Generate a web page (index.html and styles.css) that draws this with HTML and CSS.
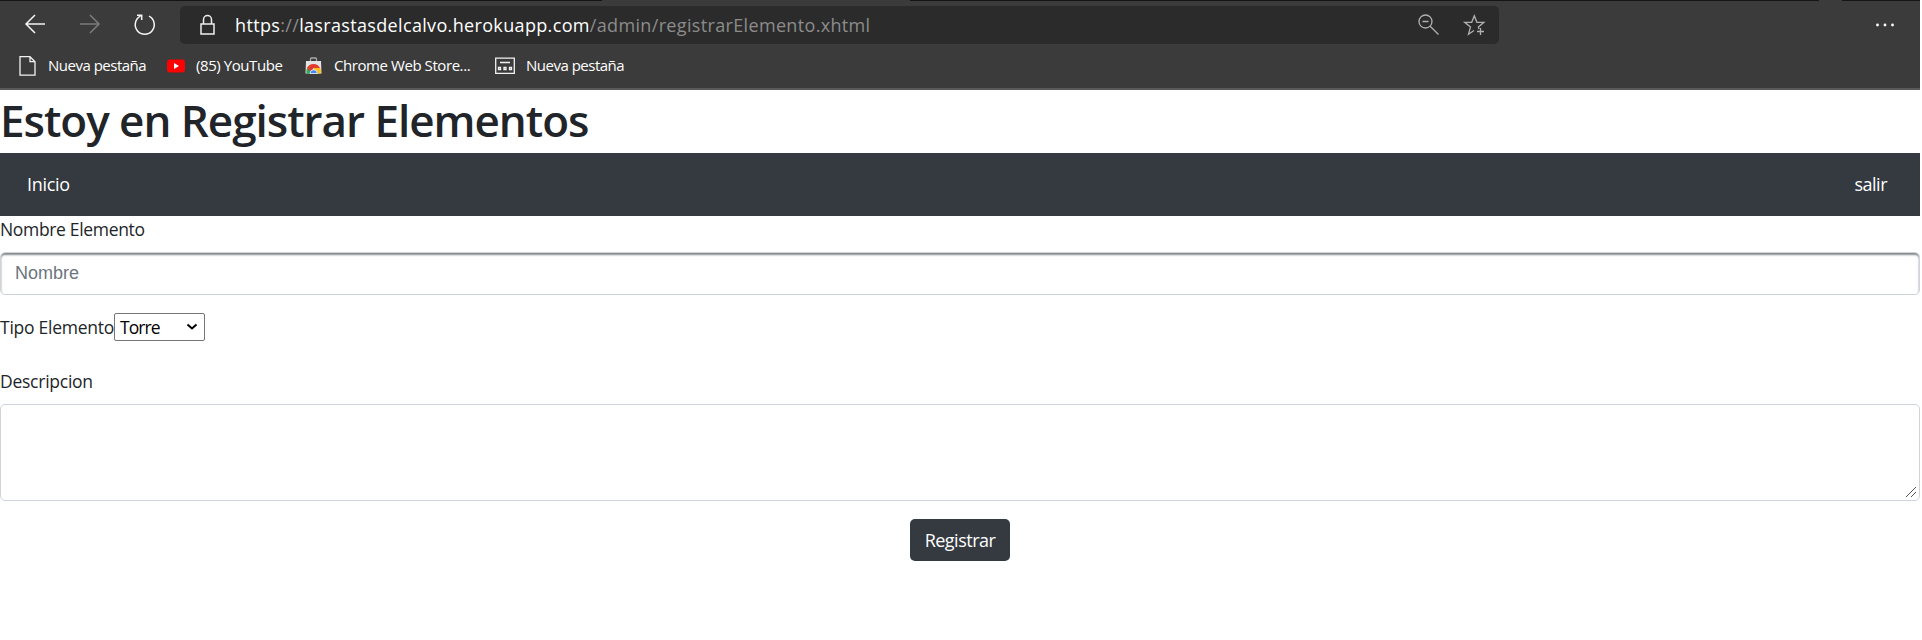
FILE: index.html
```html
<!DOCTYPE html>
<html lang="es">
<head>
<meta charset="utf-8">
<title>Registrar Elementos</title>
<link rel="stylesheet" href="styles.css">
</head>
<body>
<div class="window">
  <header class="browser">
    <div class="tab-edge"><span class="edge-left"></span><span class="edge-mid"></span><span class="edge-right"></span></div>
    <div class="toolbar">
      <svg class="nav-icons" width="180" height="38" fill="none" stroke="#f4f4f4" stroke-width="1.5">
        <path d="M45 18H26M35 9l-9 9 9 9"/>
        <path stroke="#7b7b7b" d="M80 18h19M90 9l9 9-9 9"/>
        <path d="M149 10.200A9.500 9.500 0 1 1 140.500 10.200M137 9.200h4.700v4.700"/>
      </svg>
      <div class="address">
        <svg class="lock" width="16" height="22" fill="none" stroke="#eee" stroke-width="1.500"><path d="M1 10h13v10H1zM3.500 10V5.500a4 4 0 0 1 8 0V10"/></svg>
        <span class="url"><b>https</b>://<b>lasrastasdelcalvo.herokuapp.com</b>/admin/registrarElemento.xhtml</span>
        <svg class="address-icons" width="82" height="38" fill="none" stroke="#b0b0b0" stroke-width="1.300">
          <circle cx="8.500" cy="15.500" r="6.500"/><path d="M5.500 15.500h6M13.200 20.200l8.300 8.300"/>
          <path d="M57 24.500l-5.500 3.700 2-7.200-5.800-4.700h7l2.600-6.500 2.600 6.500h7l-5.500 4.700.5 2M63.500 22v7M60 25.500h7"/>
        </svg>
      </div>
      <svg class="more" width="22" height="6" fill="#fff"><circle cx="2.500" cy="3" r="1.400"/><circle cx="10" cy="3" r="1.400"/><circle cx="17.500" cy="3" r="1.400"/></svg>
    </div>
    <nav class="bookmarks">
      <a class="bookmark first"><svg width="18" height="20" fill="none" stroke="#f2f2f2" stroke-width="1.300"><path d="M1 .7h10l5 5v13.500H1zM11 .7v5h5"/></svg><span class="t-new">Nueva pestaña</span></a>
      <a class="bookmark second"><svg width="18" height="20"><rect y="3.500" width="18" height="13" rx="3" fill="red"/><path d="M7 7l5 3-5 3z" fill="#fff"/></svg><span class="t-tube">(85) YouTube</span></a>
      <a class="bookmark third"><svg width="18" height="20"><path d="M5.500 5V3q0-1 1-1h4q1 0 1 1v2" fill="none" stroke="#aaa" stroke-width="1.300"/><path d="M1 5h15l.5 12.500H.5z" fill="#e4e4e4"/><path d="M1.500 17.500a7.200 7.200 0 0 1 1-6l5 3.500v2.500z" fill="#34a853"/><path d="M2 12a7.200 7.200 0 0 1 13 0H8.500L6 16z" fill="#e33b2e"/><path d="M9 12h6.300q1 2.500.3 5.500H9z" fill="#fbc116"/><path d="M5 17.500a3.700 3.700 0 0 1 7.400 0z" fill="#4285f4" stroke="#fff" stroke-width=".7"/></svg><span class="t-store">Chrome Web Store...</span></a>
      <a class="bookmark fourth"><svg width="20" height="20" fill="none" stroke="#f2f2f2" stroke-width="1.300"><path d="M.7 2.200h18.600v15.100H.7zM5 6.500h10M3.500 11.500h2v2h-2zM9 11.500h2v2H9zM14.500 11.500h2v2h-2z"/></svg><span class="t-new">Nueva pestaña</span></a>
    </nav>
  </header>
  <main>
    <h1><span class="t-title">Estoy en Registrar Elementos</span></h1>
    <nav class="navbar"><a class="t-home">Inicio</a><a class="t-exit">salir</a></nav>
    <form>
      <label class="name-label"><span class="t-name">Nombre Elemento</span></label>
      <input class="name-input" type="text" placeholder="Nombre">
      <div class="type-row"><label class="t-type">Tipo Elemento</label>
        <div class="select"><span class="t-option">Torre</span><svg width="12" height="8" fill="none" stroke="#000" stroke-width="2"><path d="M1.500 1.500L6 5.500l4.500-4"/></svg></div>
      </div>
      <label class="desc-label"><span class="t-desc">Descripcion</span></label>
      <div class="textarea"><svg width="12" height="12" stroke="#555" stroke-width="1"><path d="M1 11L11 1M6 11l5-5"/></svg></div>
      <div class="actions"><button type="button"><span class="t-button">Registrar</span></button></div>
    </form>
  </main>
</div>
</body>
</html>
```
FILE: styles.css
```css
* { box-sizing: border-box; }
body { margin: 0; background: #fff; color: #212529; font: 18px/27px "Open Sans", "Noto Sans", sans-serif; overflow: hidden; }
.window { width: 1920px; height: 640px; }
span, a, label { white-space: nowrap; }
svg { display: block; flex: none; }
.browser { height: 90px; background: #3b3b3b; border-bottom: 2px solid #5a5a5a; color: #fff; }
.tab-edge { display: flex; height: 1px; }
.edge-left { width: 602px; background: #151515; }
.edge-mid { margin-left: 308px; width: 909px; background: #151515; }
.edge-right { margin-left: 23px; flex: 1; background: #151515; }
.toolbar { display: flex; height: 43px; padding-top: 5px; }
.address { display: flex; align-items: center; width: 1319px; height: 38px; background: #2b2b2b; border-radius: 5px; }
.lock { margin-left: 20px; }
.url { flex: 1; margin-left: 19px; color: #8c8c8c; letter-spacing: .34px; }
.url b { color: #fff; font-weight: 400; }
.more { margin: 16px 0 0 376px; }
.bookmarks { display: flex; height: 44px; align-items: center; font-size: 15px; letter-spacing: -.43px; }
.bookmark { display: flex; align-items: center; gap: 11px; }
.bookmark span { padding-bottom: 1px; }
.t-new { letter-spacing: -.5px; }
.first { margin-left: 19px; width: 148px; }
.second { width: 138px; }
.third { width: 190px; }
h1 { margin: 0; height: 63px; font-size: 44px; line-height: 60px; font-weight: 600; letter-spacing: -1.02px; }
.navbar { display: flex; justify-content: space-between; align-items: center; height: 63px; padding: 0 33px 0 27px; background: #343a40; color: #fff; }
.t-home { letter-spacing: -.3px; }
.t-exit { letter-spacing: -.5px; }
.name-label, .desc-label { display: block; }
.name-label { height: 36px; font-size: 17.5px; letter-spacing: -.33px; }
.name-input { display: block; width: 1920px; height: 43px; padding: 0 14px; border: 1px solid #ced4da; border-radius: 5px; box-shadow: inset 0 2px 2px #858a8f; font: 18px "Liberation Sans", sans-serif; color: #495057; }
.name-input::placeholder { color: #6c757d; opacity: 1; }
.type-row { display: flex; height: 28px; margin-top: 18px; align-items: center; }
.t-type { width: 114px; font-size: 17.5px; letter-spacing: -.26px; }
.select { display: flex; align-items: center; justify-content: space-between; width: 91px; height: 28px; padding: 0 6px 0 5px; border: 1px solid #767676; border-radius: 2px; color: #000; font-size: 17.5px; letter-spacing: -.9px; }
.desc-label { margin-top: 27px; height: 36px; font-size: 17.5px; letter-spacing: -.25px; }
.textarea { display: flex; justify-content: flex-end; align-items: flex-end; height: 97px; padding: 2px; border: 1px solid #ced4da; border-radius: 5px; }
.actions { display: flex; justify-content: center; margin-top: 18px; }
button { width: 100px; height: 42px; padding: 0; border: 0; border-radius: 5px; background: #343a40; color: #fff; font: inherit; letter-spacing: -.5px; }
```
